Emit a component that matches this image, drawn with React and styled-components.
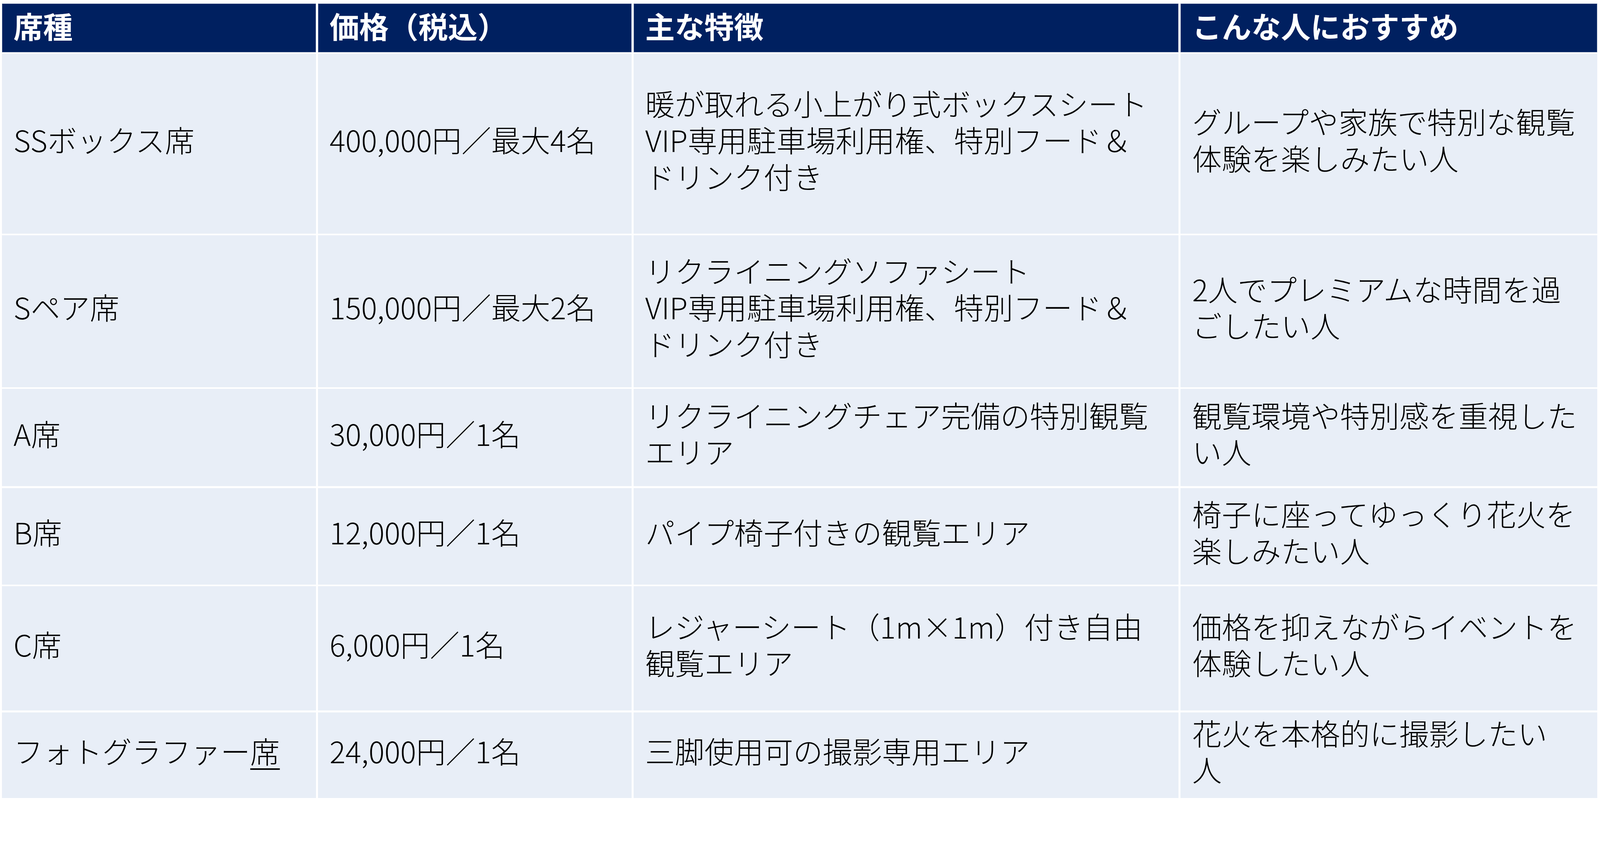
import React from 'react'
import styled, { createGlobalStyle } from 'styled-components';

// the slide is measured in screenshot pixels; scale them to the viewport width
const r = n => `${(n * 100 / 4379).toFixed(4)}vw`;

const GlobalStyle = createGlobalStyle`
    html, body {
        margin: 0;
        padding: 0;
        background: #ffffff;
        overflow: hidden;
    }
    body {
        font-family: "Noto Sans CJK JP", "Noto Sans", sans-serif;
    }
`

const Page = styled.div`
    padding: ${r(10)} 0 0 ${r(5)};
`

const Table = styled.div`
    display: grid;
    grid-template-columns: ${r(860)} ${r(859)} ${r(1492)} ${r(1141)};
    grid-template-rows: ${r(133)} ${r(491)} ${r(415)} ${r(266)} ${r(264)} ${r(340)} ${r(234)};
    gap: ${r(5)};
    width: ${r(4367)};
`

const HeadCell = styled.div`
    display: flex;
    align-items: center;
    box-sizing: border-box;
    padding: 0 ${r(26)} ${r(12)} ${r(32)};
    background: #002060;
    box-shadow: inset 0 0 0 1px #7b8db0;
    color: #ffffff;
    font-size: ${r(81)};
    line-height: ${r(100)};
    font-weight: 700;
`

const Cell = styled.div`
    display: flex;
    align-items: center;
    box-sizing: border-box;
    padding: 0 ${r(20)} ${r(24)} ${r(32)};
    background: #e8eef7;
    color: #000000;
    font-size: ${r(81)};
    line-height: ${r(100)};
    font-weight: 300;
`

const CellText = styled.span`
    display: block;
    white-space: nowrap;
`

const Marked = styled.span`
    text-decoration: underline;
    text-decoration-thickness: ${r(4)};
    text-underline-offset: ${r(14)};
`

const headers = ["席種", "価格（税込）", "主な特徴", "こんな人におすすめ"];

const rows = [
    {
        seat: "SSボックス席",
        price: "400,000円／最大4名",
        features: ["暖が取れる小上がり式ボックスシート", "VIP専用駐車場利用権、特別フード＆", "ドリンク付き"],
        forWho: ["グループや家族で特別な観覧", "体験を楽しみたい人"],
    },
    {
        seat: "Sペア席",
        price: "150,000円／最大2名",
        features: ["リクライニングソファシート", "VIP専用駐車場利用権、特別フード＆", "ドリンク付き"],
        forWho: ["2人でプレミアムな時間を過", "ごしたい人"],
    },
    {
        seat: "A席",
        price: "30,000円／1名",
        features: ["リクライニングチェア完備の特別観覧", "エリア"],
        forWho: ["観覧環境や特別感を重視した", "い人"],
    },
    {
        seat: "B席",
        price: "12,000円／1名",
        features: ["パイプ椅子付きの観覧エリア"],
        forWho: ["椅子に座ってゆっくり花火を", "楽しみたい人"],
    },
    {
        seat: "C席",
        price: "6,000円／1名",
        features: ["レジャーシート（1m×1m）付き自由", "観覧エリア"],
        forWho: ["価格を抑えながらイベントを", "体験したい人"],
    },
    {
        seat: <>フォトグラファー<Marked>席</Marked></>,
        price: "24,000円／1名",
        features: ["三脚使用可の撮影専用エリア"],
        forWho: ["花火を本格的に撮影したい", "人"],
    },
];

function Lines({ lines }) {
    return (
        <CellText>
            {lines.map((line, i) => (
                <React.Fragment key={i}>
                    {i > 0 && <br />}
                    {line}
                </React.Fragment>
            ))}
        </CellText>
    )
}

function App() {
  return (
      <>
          <GlobalStyle />
          <Page>
              <Table>
                  {headers.map(h => (
                      <HeadCell key={h}><CellText>{h}</CellText></HeadCell>
                  ))}
                  {rows.map((row, i) => (
                      <React.Fragment key={i}>
                          <Cell><CellText>{row.seat}</CellText></Cell>
                          <Cell><CellText>{row.price}</CellText></Cell>
                          <Cell><Lines lines={row.features} /></Cell>
                          <Cell><Lines lines={row.forWho} /></Cell>
                      </React.Fragment>
                  ))}
              </Table>
          </Page>
      </>
  )
}

export default App
